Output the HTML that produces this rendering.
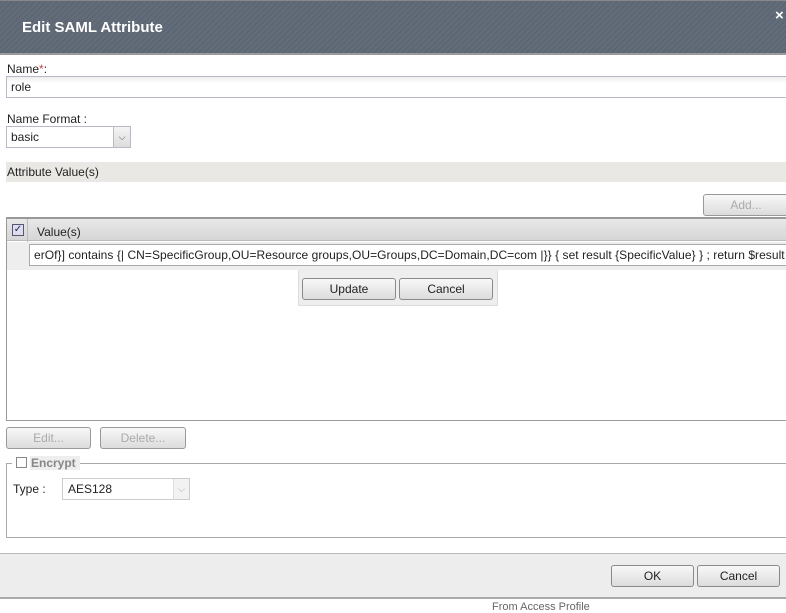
<!DOCTYPE html>
<html><head><style>
*{box-sizing:border-box;margin:0;padding:0}
body{width:786px;height:605px;overflow:hidden;background:#fff;font-family:"Liberation Sans",Arial,sans-serif;font-size:12px;color:#222;position:relative}
.a{position:absolute}
.btn{position:absolute;height:22px;border:1px solid #8a8a8a;border-radius:3px;background:linear-gradient(#f8f8f8,#dcdcdc);text-align:center;line-height:20px;font-size:12px;color:#222}
.dis{color:#aaa;border-color:#999}
</style></head><body>
<div class="a" style="left:0;top:0;width:786px;height:55px;background:repeating-linear-gradient(135deg,#5d6774 0 2px,#636d7a 2px 4px);border-top:1px solid #888;border-bottom:2px solid #9a9a9a"></div>
<div class="a" style="left:22px;top:19px;color:#fff;font-weight:bold;font-size:15px">Edit SAML Attribute</div>
<div class="a" style="left:775px;top:7px;color:#fff;font-weight:bold;font-size:15px">×</div>
<div class="a" style="left:7px;top:62px">Name<span style="color:#c44">*</span>:</div>
<div class="a" style="left:6px;top:76px;width:790px;height:22px;border:1px solid #b8b8c8;background:linear-gradient(#eee,#fff 6px);padding:3px 4px">role</div>
<div class="a" style="left:7px;top:112px">Name Format :</div>
<div class="a" style="left:6px;top:126px;width:125px;height:22px;border:1px solid #b8b8c8;padding:3px 4px">basic</div>
<div class="a" style="left:113px;top:127px;width:17px;height:20px;background:linear-gradient(#f4f4f4,#ddd);border-left:1px solid #bbb;text-align:center;font-size:9px;line-height:20px;color:#444">&#9013;</div>
<div class="a" style="left:6px;top:162px;width:780px;height:20px;background:#e9e8e4;padding:3px 1px">Attribute Value(s)</div>
<div class="btn dis" style="left:703px;top:194px;width:86px">Add...</div>
<div class="a" style="left:6px;top:217px;width:790px;height:204px;border:1px solid #999;border-top:2px solid #999"></div>
<div class="a" style="left:7px;top:219px;width:780px;height:22px;background:linear-gradient(#e8e8e8,#d6d6d6);border-bottom:1px solid #bbb"></div>
<div class="a" style="left:27px;top:219px;width:1px;height:50px;background:#bbb"></div>
<div class="a" style="left:12px;top:224px;width:12px;height:12px;border:1px solid #557;background:#dde;font-size:10px;line-height:10px;text-align:center;color:#225">✓</div>
<div class="a" style="left:37px;top:225px">Value(s)</div>
<div class="a" style="left:7px;top:242px;width:780px;height:28px;background:#eee"></div>
<div class="a" style="left:29px;top:244px;width:760px;height:22px;border:1px solid #aaa;background:#fff;padding:3px 4px;white-space:nowrap;overflow:hidden;letter-spacing:0.05px">erOf}] contains {| CN=SpecificGroup,OU=Resource groups,OU=Groups,DC=Domain,DC=com |}} { set result {SpecificValue} } ; return $result }</div>
<div class="a" style="left:298px;top:270px;width:200px;height:36px;background:#eeeeee;border:1px solid #ddd;border-top:none"></div>
<div class="btn" style="left:302px;top:278px;width:94px">Update</div>
<div class="btn" style="left:399px;top:278px;width:94px">Cancel</div>
<div class="btn dis" style="left:6px;top:427px;width:85px">Edit...</div>
<div class="btn dis" style="left:100px;top:427px;width:86px">Delete...</div>
<div class="a" style="left:6px;top:463px;width:790px;height:75px;border:1px solid #aaa"></div>
<div class="a" style="left:12px;top:456px;padding:0 4px;color:#888;font-weight:bold;font-size:12px;background:linear-gradient(90deg,#fff 18px,#eee 18px)"><span style="display:inline-block;width:11px;height:11px;border:1px solid #888;vertical-align:-1px;margin-right:4px;background:#fff"></span>Encrypt</div>
<div class="a" style="left:13px;top:482px">Type :</div>
<div class="a" style="left:62px;top:478px;width:128px;height:22px;border:1px solid #ccc;padding:3px 5px">AES128</div>
<div class="a" style="left:173px;top:479px;width:16px;height:20px;background:#f2f2f2;border-left:1px solid #ddd;text-align:center;font-size:9px;line-height:20px;color:#aaa">&#9013;</div>
<div class="a" style="left:0;top:553px;width:786px;height:46px;background:#ededed;border-top:1px solid #bbb;border-bottom:2px solid #aaa"></div>
<div class="btn" style="left:611px;top:565px;width:83px">OK</div>
<div class="btn" style="left:697px;top:565px;width:83px">Cancel</div>
<div class="a" style="left:492px;top:601px;color:#666;font-size:11px">From Access Profile</div>
</body></html>
